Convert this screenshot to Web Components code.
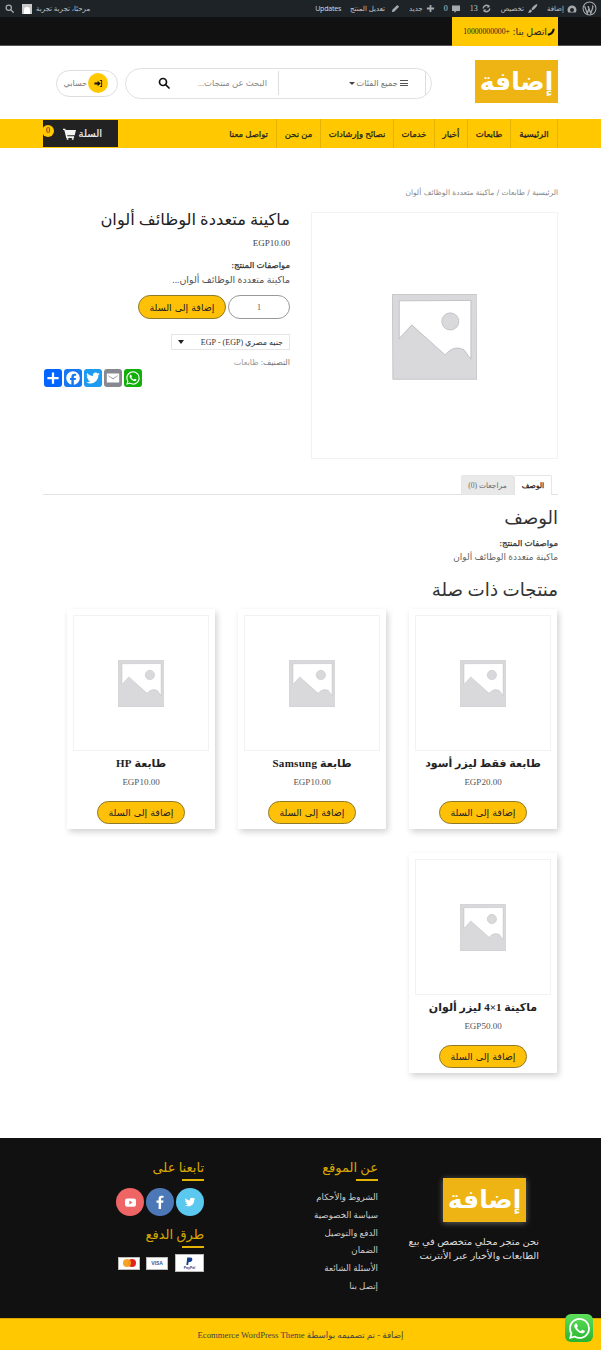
<!DOCTYPE html>
<html lang="ar" dir="rtl">
<head>
<meta charset="utf-8">
<title>ماكينة متعددة الوظائف ألوان</title>
<style>
  html, body { margin: 0; padding: 0; background: #fff; }
  body { font-family: "Liberation Serif", "DejaVu Sans", serif; color: #333; width: 601px; height: 1350px; overflow: hidden; position: relative; }
</style>
</head>
<body>
<wp-adminbar></wp-adminbar>
<top-strip></top-strip>
<site-header></site-header>
<main-nav></main-nav>
<product-page></product-page>
<related-products>
  <product-card name="طابعة فقط ليزر أسود" price="EGP20.00"></product-card>
  <product-card name="طابعة Samsung" price="EGP10.00"></product-card>
  <product-card name="طابعة HP" price="EGP10.00"></product-card>
  <product-card name="ماكينة 1×4 ليزر ألوان" price="EGP50.00"></product-card>
</related-products>
<site-footer></site-footer>
<whatsapp-float></whatsapp-float>

<script>
const WA_PATH = 'M17.472 14.382c-.297-.149-1.758-.867-2.03-.967-.273-.099-.471-.148-.67.15-.197.297-.767.966-.94 1.164-.173.199-.347.223-.644.075-.297-.15-1.255-.463-2.39-1.475-.883-.788-1.48-1.761-1.653-2.059-.173-.297-.018-.458.13-.606.134-.133.298-.347.446-.52.149-.174.198-.298.298-.497.099-.198.05-.371-.025-.52-.075-.149-.669-1.612-.916-2.207-.242-.579-.487-.5-.669-.51-.173-.008-.371-.01-.57-.01-.198 0-.52.074-.792.372-.272.297-1.04 1.016-1.04 2.479 0 1.462 1.065 2.875 1.213 3.074.149.198 2.096 3.2 5.077 4.487.709.306 1.262.489 1.694.625.712.227 1.36.195 1.871.118.571-.085 1.758-.719 2.006-1.413.248-.694.248-1.289.173-1.413-.074-.124-.272-.198-.57-.347m-5.421 7.403h-.004a9.87 9.87 0 01-5.031-1.378l-.361-.214-3.741.982.998-3.648-.235-.374a9.86 9.86 0 01-1.51-5.26c.001-5.45 4.436-9.884 9.888-9.884 2.64 0 5.122 1.03 6.988 2.898a9.825 9.825 0 012.893 6.994c-.003 5.45-4.437 9.884-9.885 9.884m8.413-18.297A11.815 11.815 0 0012.05 0C5.495 0 .16 5.335.157 11.892c0 2.096.547 4.142 1.588 5.945L.057 24l6.305-1.654a11.882 11.882 0 005.683 1.448h.005c6.554 0 11.89-5.335 11.893-11.893a11.821 11.821 0 00-3.48-8.413z';
const TW_PATH = 'M28 8.557a10 10 0 0 1-2.828.775 4.93 4.93 0 0 0 2.166-2.725 9.7 9.7 0 0 1-3.13 1.194 4.92 4.92 0 0 0-3.593-1.55 4.924 4.924 0 0 0-4.794 6.049c-4.09-.21-7.72-2.17-10.15-5.15a4.94 4.94 0 0 0-.665 2.477c0 1.71.87 3.214 2.19 4.1a5 5 0 0 1-2.23-.616v.06c0 2.39 1.7 4.38 3.952 4.83-.414.115-.85.174-1.297.174q-.476-.001-.928-.086a4.935 4.935 0 0 0 4.6 3.42 9.9 9.9 0 0 1-6.114 2.107q-.597 0-1.175-.068a13.95 13.95 0 0 0 7.55 2.213c9.056 0 14.01-7.507 14.01-14.013q0-.32-.015-.637c.96-.695 1.795-1.56 2.455-2.55z';
const FB_PATH = 'M28 16c0-6.627-5.373-12-12-12S4 9.373 4 16c0 5.628 3.875 10.35 9.101 11.647v-7.98h-2.474V16H13.1v-1.58c0-4.085 1.849-5.978 5.859-5.978.76 0 2.072.15 2.608.298v3.325c-.283-.03-.775-.045-1.386-.045-1.967 0-2.728.745-2.728 2.683V16h3.92l-.673 3.667h-3.247v8.245C23.395 27.195 28 22.135 28 16';
const SEARCH_ICON = (c, s) => `<svg width="${s}" height="${s}" viewBox="0 0 24 24" fill="none" stroke="${c}" stroke-width="3.4"><circle cx="10" cy="10" r="7"/><path d="M15 15l7 7" stroke-linecap="round"/></svg>`;

function define(name, html, onConnect) {
  const template = document.createElement('template');
  template.innerHTML = html;
  customElements.define(name, class extends HTMLElement {
    constructor() {
      super();
      this.attachShadow({ mode: 'open' }).appendChild(template.content.cloneNode(true));
    }

    connectedCallback() {
      if (onConnect) onConnect(this);
    }
  });
}

define('wp-adminbar', `
  <style>
    :host { display: flex; justify-content: space-between; align-items: center; height: 17px; background: #1d2327; color: #c3c4c7; padding: 0 4px 0 5px; font: 7px "Open Sans", "DejaVu Sans", sans-serif; }
    .side { display: flex; align-items: center; }
    .item { display: flex; align-items: center; gap: 3px; margin-left: 9px; white-space: nowrap; }
    svg { display: block; flex: none; }
    .end { margin-left: 5px; }
    .ups { color: #dcdcde; margin-left: 0; letter-spacing: -.2px; }
    .num { font: 8px "Liberation Serif", serif; }
    .avatar { width: 10px; height: 10px; background: #c9c9c9; display: flex; justify-content: center; align-items: flex-end; overflow: hidden; }
    .avatar i { width: 6px; height: 7px; background: #fff; border-radius: 3px 3px 0 0; }
  </style>
  <div class="side">
    <span class="item end"><svg width="15" height="15" viewBox="0 0 20 20"><circle cx="10" cy="10" r="8.6" fill="none" stroke="#a7aaad" stroke-width="1.4"/><path d="M3.5 7l3.6 9.6L9.4 10 8.2 7M8 7l3.7 9.6 2.6-7.6c.6-1.6-.2-2.6-.7-3" fill="none" stroke="#a7aaad" stroke-width="1.7"/></svg></span>
    <span class="item"><svg width="10" height="10" viewBox="0 0 20 20"><path d="M10 3a9 9 0 0 0-9 9c0 2 .7 3.600 1.700 5h14.600c1-1.400 1.700-3 1.700-5a9 9 0 0 0-9-9zm0 5a4 4 0 0 1 4 4 4 4 0 0 1-8 0 4 4 0 0 1 4-4z" fill="#a7aaad"/></svg>إضافة</span>
    <span class="item"><svg width="11" height="11" viewBox="0 0 20 20"><path d="M18 2c-3 1-8 5-10 9l2 2c4-2 8-7 9-10zM7 12c-3 0-3 3-5 6 3 0 7-1 7-4z" fill="#a7aaad"/></svg>تخصيص</span>
    <span class="item"><svg width="11" height="11" viewBox="0 0 20 20" fill="none" stroke="#a7aaad" stroke-width="2.600"><path d="M4 10a6 6 0 0 1 11-3M16 10a6 6 0 0 1-11 3"/><path d="M15 3v5h-5M5 17v-5h5" stroke-width="0" fill="#a7aaad"/></svg><span class="num">13</span></span>
    <span class="item"><svg width="10" height="10" viewBox="0 0 20 20"><path d="M2 3h16v11h-7l-4 4v-4H2z" fill="#a7aaad"/></svg><span class="num">0</span></span>
    <span class="item"><svg width="9" height="9" viewBox="0 0 20 20"><path d="M8 2h4v6h6v4h-6v6H8v-6H2V8h6z" fill="#a7aaad"/></svg>جديد</span>
    <span class="item" style="gap:6px"><svg width="9" height="9" viewBox="0 0 20 20"><path d="M14 2l4 4L7 17l-5 1 1-5z" fill="#a7aaad"/></svg>تعديل المنتج</span>
    <span class="item ups">Updates</span>
  </div>
  <div class="side">
    <span class="item" style="margin-left:4px">مرحبًا، تجربة تجربة</span>
    <span class="avatar" style="margin-left:8px"><i></i></span>
    ${SEARCH_ICON('#a7aaad', 9)}
  </div>
`);

define('top-strip', `
  <style>
    :host { display: flex; height: 29px; background: #111; padding-right: 43px; box-sizing: border-box; border-bottom: 1px solid #555; }
    .call { display: flex; align-items: center; height: 29px; width: 106px; box-sizing: border-box; padding: 0 3px 0 0; background: #ffc800; color: #222; font-size: 9.5px; white-space: nowrap; position: relative; z-index: 1; }
    .num { margin-right: 3px; font-size: 7.7px; }
    svg { display: block; flex: none; }
  </style>
  <div class="call">
    <svg width="8" height="8" viewBox="0 0 20 20"><path d="M2 14c6 0 12-6 12-12h5c0 10-8 17-17 17z" fill="#111"/></svg>
    <span>اتصل بنا:</span><span class="num">+10000000000</span>
  </div>
`);

define('site-header', `
  <style>
    :host { display: flex; align-items: center; height: 72px; padding: 0 43px 0 0; box-sizing: border-box; }
    .logo { width: 83px; height: 43px; background: #eeb413; color: #fff; display: flex; align-items: center; justify-content: center; font: bold 25px "DejaVu Sans", sans-serif; margin-top: -1px; }
    .search { display: flex; align-items: center; width: 307px; height: 31px; box-sizing: border-box; margin-right: 43px; border: 1px solid #e1e1e1; border-radius: 16px; color: #777; font-size: 8.5px; margin-top: 2px; }
    .cats { display: flex; align-items: center; justify-content: flex-start; gap: 1px; width: 148px; height: 24px; box-sizing: border-box; padding-right: 17px; margin-right: 5px; border-right: 1px solid #ddd; border-left: 1px solid #ddd; white-space: nowrap; }
    .bars { width: 8px; height: 6px; border-top: 1px solid #555; border-bottom: 1px solid #555; position: relative; box-sizing: border-box; margin-left: 1px; }
    .bars::after { content: ""; position: absolute; right: 0; left: 0; top: 1.500px; height: 1px; background: #555; }
    .tri { border: 3px solid transparent; border-top: 3px solid #444; border-bottom-width: 0; }
    .q { flex: 1; padding-right: 11px; white-space: nowrap; color: #888; }
    .mag { margin-left: 32px; display: block; }
    .acc { display: flex; align-items: center; gap: 1px; width: 62px; height: 27px; box-sizing: border-box; margin-right: 7px; padding-right: 9px; border: 1px solid #ddd; border-radius: 14px; color: #777; font-size: 8px; margin-top: 2px; white-space: nowrap; }
    .dot { width: 20px; height: 20px; border-radius: 50%; background: #ffc800; display: flex; align-items: center; justify-content: center; flex: none; }
  </style>
  <div class="logo">إضافة</div>
  <div class="search">
    <div class="cats"><i class="bars"></i><span>جميع الفئات</span><i class="tri"></i></div>
    <div class="q">البحث عن منتجات...</div>
    <svg class="mag" width="12" height="12" viewBox="0 0 24 24" fill="none" stroke="#111" stroke-width="3.400"><circle cx="10" cy="10" r="7"/><path d="M15 15l7 7" stroke-linecap="round"/></svg>
  </div>
  <div class="acc">
    <span class="dot"><svg width="9" height="9" viewBox="0 0 20 20"><path d="M1 8h7V4l7 6-7 6v-4H1zM13 2h5v16h-5v-2h3V4h-3z" fill="#111"/></svg></span>
    <span>حسابي</span>
  </div>
`);

define('main-nav', `
  <style>
    :host { display: flex; justify-content: space-between; height: 29px; margin-top: 1px; padding: 0 43px; background: #ffc800; }
    nav { display: flex; border-right: 1px solid #e5b400; }
    a { display: flex; align-items: center; justify-content: center; box-sizing: border-box; border-left: 1px solid #e5b400; color: #222; font-size: 8.5px; -webkit-text-stroke: .25px #222; white-space: nowrap; }
    a:last-child { border-left: 0; justify-content: flex-start; padding-right: 8px; }
    .cart { position: relative; display: flex; align-items: center; gap: 3px; box-sizing: border-box; width: 75px; height: 27px; margin-top: 1px; padding-right: 16px; background: #222; color: #f0f0f0; font-size: 10px; -webkit-text-stroke: .2px #f0f0f0; }
    .badge { position: absolute; left: -1px; top: 5px; width: 12px; height: 12px; border-radius: 50%; background: #ffc800; color: #222; -webkit-text-stroke: 0; font: 8px/12px "Liberation Serif", serif; text-align: center; }
    svg { display: block; }
  </style>
  <nav>
    <a style="width:47px">الرئيسية</a>
    <a style="width:43px">طابعات</a>
    <a style="width:33px">أخبار</a>
    <a style="width:41px">خدمات</a>
    <a style="width:73px">نصائح وإرشادات</a>
    <a style="width:44px">من نحن</a>
    <a style="width:59px">تواصل معنا</a>
  </nav>
  <div class="cart">
    <span>السلة</span>
    <svg width="13" height="12" viewBox="0 0 20 18"><path d="M0 1h3.500l.7 2H20l-2 8H6.500l.4 1.500H17V15H5L2 3H0z" fill="#f4f4f4"/><circle cx="7" cy="16.500" r="1.500" fill="#f4f4f4"/><circle cx="15" cy="16.500" r="1.500" fill="#f4f4f4"/></svg>
    <span class="badge">0</span>
  </div>
`);

define('placeholder-img', `
  <style>
    :host { display: flex; align-items: center; justify-content: center; box-sizing: border-box; border: 1px solid #f2f2f2; background: #fff; }
    svg { width: 35%; height: 35%; display: block; margin-top: 1%; }
  </style>
  <svg viewBox="0 0 100 100">
    <path fill="#d9d9dc" stroke="#b5b5ba" stroke-width=".8" d="M.5 .5 L99.500 .5 L99 99.500 L1 99.500Z"/>
    <path fill="#fff" stroke="#a9a9af" stroke-width=".7" d="M8.500 8 L92 7.500 L92 76 L84 65 Q74 60 66 67 L62 71 L23 36 L8.500 52Z"/>
    <circle cx="68" cy="32" r="10" fill="#d9d9dc" stroke="#b5b5ba" stroke-width=".8"/>
  </svg>
`);

define('yellow-button', `
  <style>
    :host { display: inline-flex; align-items: center; justify-content: center; box-sizing: border-box; width: 88px; height: 24px; border: 1px solid #8d7a2c; border-radius: 12px; background: #ffc107; color: #222; font: 9.5px "DejaVu Sans", sans-serif; letter-spacing: 1.6px; white-space: nowrap; }
  </style>
  <slot></slot>
`);

define('share-icons', `
  <style>
    :host { display: flex; gap: 2px; direction: ltr; }
    span { width: 18px; height: 18px; border-radius: 3px; display: block; }
    svg { width: 18px; height: 18px; display: block; }
  </style>
  <span style="background:#0166ff"><svg viewBox="0 0 32 32"><path fill="#fff" d="M14 6h4v8h8v4h-8v8h-4v-8H6v-4h8z"/></svg></span>
  <span style="background:#1877f2"><svg viewBox="0 0 32 32"><path fill="#fff" d="${FB_PATH}"/></svg></span>
  <span style="background:#1d9bf0"><svg viewBox="0 0 32 32"><path fill="#fff" d="${TW_PATH}"/></svg></span>
  <span style="background:#888990"><svg viewBox="0 0 32 32"><path fill="#fff" d="M5 8h22v16H5zM7 11v1l9 6 9-6v-1l-9 5.500z" fill-rule="evenodd"/></svg></span>
  <span style="background:#12af0a"><svg viewBox="-4 -4 32 32"><path fill="#fff" d="${WA_PATH}"/></svg></span>
`);

define('product-page', `
  <style>
    :host { display: block; padding: 40px 43px 0; }
    .crumbs { font: 7.5px/10px "DejaVu Sans", sans-serif; color: #888; height: 10px; margin-bottom: 14px; }
    .top { display: flex; justify-content: space-between; }
    placeholder-img { width: 247px; height: 247px; flex: none; }
    .sum { width: 247px; display: flex; flex-direction: column; align-items: flex-start; }
    h1 { margin: -1px 0 0; font-size: 16.3px; line-height: 18px; font-weight: normal; color: #222; white-space: nowrap; }
    .price { margin-top: 8px; font-size: 9px; line-height: 12px; color: #444; }
    .spec { margin-top: 10px; font-size: 8.5px; line-height: 12px; -webkit-text-stroke: .25px #333; color: #333; }
    .txt { margin-top: 1px; font-size: 9.5px; line-height: 16px; color: #555; }
    .buy { display: flex; gap: 2px; margin-top: 7px; }
    .qty { width: 62px; height: 24px; box-sizing: border-box; border: 1px solid #999; border-radius: 12px; display: flex; align-items: center; justify-content: center; font-size: 8px; color: #555; }
    .sel { display: flex; align-items: center; justify-content: space-between; box-sizing: border-box; width: 119px; height: 16px; margin-top: 15px; padding: 0 6px; border: 1px solid #e6e6e6; font-size: 8px; color: #333; white-space: nowrap; }
    .sel i { border: 3px solid transparent; border-top: 4px solid #222; border-bottom-width: 0; }
    .cat { margin-top: 7px; font-size: 8px; line-height: 11px; color: #999; }
    .cat b { font-weight: normal; color: #777; }
    share-icons { align-self: flex-end; margin: 1px 0 0 1px; }
    .tabs { display: flex; margin: 16px 0 0; padding-right: 6px; border-bottom: 1px solid #e2e2e2; height: 19px; font-size: 7.5px; }
    .tab { display: flex; align-items: center; justify-content: center; height: 20px; box-sizing: border-box; border: 1px solid #e6e6e6; border-radius: 2px 2px 0 0; }
    .on { width: 38px; background: #fff; border-bottom: 0; -webkit-text-stroke: .25px #222; color: #222; }
    .off { width: 53px; background: #e9e9e9; color: #666; }
    h2 { margin: 11px 0 0; font-size: 18px; line-height: 24px; font-weight: normal; color: #333; }
    .dspec { margin-top: 7px; font-size: 8.5px; line-height: 12px; -webkit-text-stroke: .25px #333; color: #333; }
    .dtxt { margin-top: 2px; font-size: 9px; line-height: 13px; color: #666; }
  </style>
  <div class="crumbs">الرئيسية / طابعات / ماكينة متعددة الوظائف ألوان</div>
  <div class="top">
    <placeholder-img></placeholder-img>
    <div class="sum">
      <h1>ماكينة متعددة الوظائف ألوان</h1>
      <div class="price" dir="ltr">EGP10.00</div>
      <div class="spec">مواصفات المنتج:</div>
      <div class="txt">ماكينة متعددة الوظائف ألوان...</div>
      <div class="buy">
        <div class="qty">1</div>
        <yellow-button>إضافة إلى السلة</yellow-button>
      </div>
      <div class="sel"><span>جنيه مصري (EGP) - EGP</span><i></i></div>
      <div class="cat"><b>التصنيف:</b> طابعات</div>
      <share-icons></share-icons>
    </div>
  </div>
  <div class="tabs"><div class="tab on">الوصف</div><div class="tab off">مراجعات (0)</div></div>
  <h2>الوصف</h2>
  <div class="dspec">مواصفات المنتج:</div>
  <div class="dtxt">ماكينة متعددة الوظائف ألوان</div>
`);

define('product-card', `
  <style>
    :host { display: flex; flex-direction: column; align-items: center; box-sizing: border-box; width: 148px; height: 220px; padding: 6px 6px 0; background: #fff; box-shadow: 2px 3px 6px rgba(0,0,0,.18); border-radius: 1px; }
    placeholder-img { width: 136px; height: 136px; flex: none; }
    .name { margin-top: 5px; font-size: 11px; line-height: 14px; font-weight: bold; letter-spacing: .3px; color: #222; white-space: nowrap; }
    .price { margin-top: 6px; font-size: 9px; line-height: 12px; color: #555; }
    yellow-button { margin-top: 13px; height: 23px; }
  </style>
  <placeholder-img></placeholder-img>
  <div class="name"></div>
  <div class="price" dir="ltr"></div>
  <yellow-button>إضافة إلى السلة</yellow-button>
`, (el) => {
  el.shadowRoot.querySelector('.name').textContent = el.getAttribute('name');
  el.shadowRoot.querySelector('.price').textContent = el.getAttribute('price');
});

define('related-products', `
  <style>
    :host { display: block; padding: 0 43px; height: 560px; }
    h2 { margin: 14px 0 7px; font-size: 18.3px; line-height: 24px; font-weight: normal; color: #333; }
    .grid { display: grid; grid-template-columns: repeat(3, 148px); column-gap: 23px; row-gap: 24px; margin: 0 1px 0 0; }
  </style>
  <h2>منتجات ذات صلة</h2>
  <div class="grid"><slot></slot></div>
`);

define('site-footer', `
  <style>
    :host { display: block; }
    .main { display: grid; grid-template-columns: 161px 174px 1fr; height: 180px; box-sizing: border-box; padding: 0 62px 0 0; background: #111; }
    .about { display: flex; flex-direction: column; align-items: flex-start; padding-top: 40px; color: #ddd; font-size: 9.8px; line-height: 14px; }
    .logo { width: 83px; height: 44px; margin-right: 13px; background: #eeb413; color: #fff; display: flex; align-items: center; justify-content: center; font-size: 25px; font-weight: bold; font-family: "DejaVu Sans", sans-serif; box-shadow: 0 1px 6px rgba(255,255,255,.35); margin-bottom: 13px; }
    .about p { margin: 0; white-space: nowrap; }
    .col { padding: 22px 0 0; }
    h4 { margin: 0; font-size: 13px; line-height: 15px; font-weight: normal; letter-spacing: 2px; color: #d9a800; }
    h4::after { content: ""; display: block; width: 22px; height: 2px; margin-top: 4px; background: #e5b400; }
    .links { margin-top: 8px; display: flex; flex-direction: column; align-items: flex-start; font-size: 8.7px; line-height: 17.8px; color: #ccc; white-space: nowrap; }
    .circles { display: flex; gap: 2px; margin-top: 7px; }
    .circles span { width: 28px; height: 28px; border-radius: 50%; display: flex; align-items: center; justify-content: center; }
    .pays { display: flex; align-items: center; gap: 6px; margin-top: 6px; }
    .pay { background: #fff; border: 1px solid #bbb; box-sizing: border-box; display: flex; align-items: center; justify-content: center; width: 22px; height: 13px; overflow: hidden; font: bold 5px "Liberation Sans", sans-serif; color: #2a5aa0; }
    .pp { width: 29px; height: 18px; flex-direction: column; font-size: 3.500px; line-height: 4px; color: #1a3d8c; margin-left: 1px; }
    .mc { display: flex; }
    .mc i { width: 8px; height: 8px; border-radius: 50%; background: #e2231a; }
    .mc i + i { background: #f79e1b; margin-right: -3px; opacity: .95; }
    .bar { display: flex; align-items: center; justify-content: center; height: 32px; box-sizing: border-box; border-top: 1px solid #d9a800; background: #ffc800; color: #444; font-size: 8.700px; white-space: nowrap; }
    svg { display: block; }
  </style>
  <div class="main">
    <div class="about">
      <div class="logo">إضافة</div>
      <p>نحن متجر محلي متخصص في بيع<br>الطابعات والأخبار عبر الأنترنت</p>
    </div>
    <div class="col">
      <h4>عن الموقع</h4>
      <div class="links">
        <span>الشروط والأحكام</span><span>سياسة الخصوصية</span><span>الدفع والتوصيل</span><span>الضمان</span><span>الأسئلة الشائعة</span><span>إتصل بنا</span>
      </div>
    </div>
    <div class="col">
      <h4>تابعنا على</h4>
      <div class="circles">
        <span style="background:#5bc8f0"><svg width="14" height="14" viewBox="0 0 32 32"><path fill="#fff" d="${TW_PATH}"/></svg></span>
        <span style="background:#4c78b8"><svg width="12" height="14" viewBox="0 0 12 20"><path fill="#fff" d="M4 20V11H1V8h3V5.500C4 2.500 5.500 1 8 1h3v3H9C8 4 7.500 4.500 7.500 5.500V8H11l-.5 3h-3v9z"/></svg></span>
        <span style="background:#ef6464"><svg width="11" height="9" viewBox="0 0 20 16"><rect width="20" height="15" y=".5" rx="4" fill="#fff"/><path d="M8 4.500l5.500 3.500L8 11.500z" fill="#ef6464"/></svg></span>
      </div>
      <h4 style="margin-top:11px">طرق الدفع</h4>
      <div class="pays">
        <span class="pay pp"><svg width="9" height="9" viewBox="0 0 20 20"><path d="M5 1h7c4 0 5 3 4 6-1 2-3 4-6 4H8l-1 7H3z" fill="#12408f"/></svg><span>PayPal</span></span>
        <span class="pay">VISA</span>
        <span class="pay"><span class="mc"><i></i><i></i></span></span>
      </div>
    </div>
  </div>
  <div class="bar"><span>إضافة - تم تصميمه بواسطة Ecommerce WordPress Theme</span></div>
`);

define('whatsapp-float', `
  <style>
    :host { position: absolute; left: 565px; top: 1314px; width: 28px; height: 28px; border-radius: 6px; background: linear-gradient(#5fe05c, #28b42c); display: flex; align-items: center; justify-content: center; }
    svg { width: 21px; height: 21px; display: block; }
  </style>
  <svg viewBox="0 0 24 24"><path fill="#fff" d="${WA_PATH}"/></svg>
`);
</script>
</body>
</html>
